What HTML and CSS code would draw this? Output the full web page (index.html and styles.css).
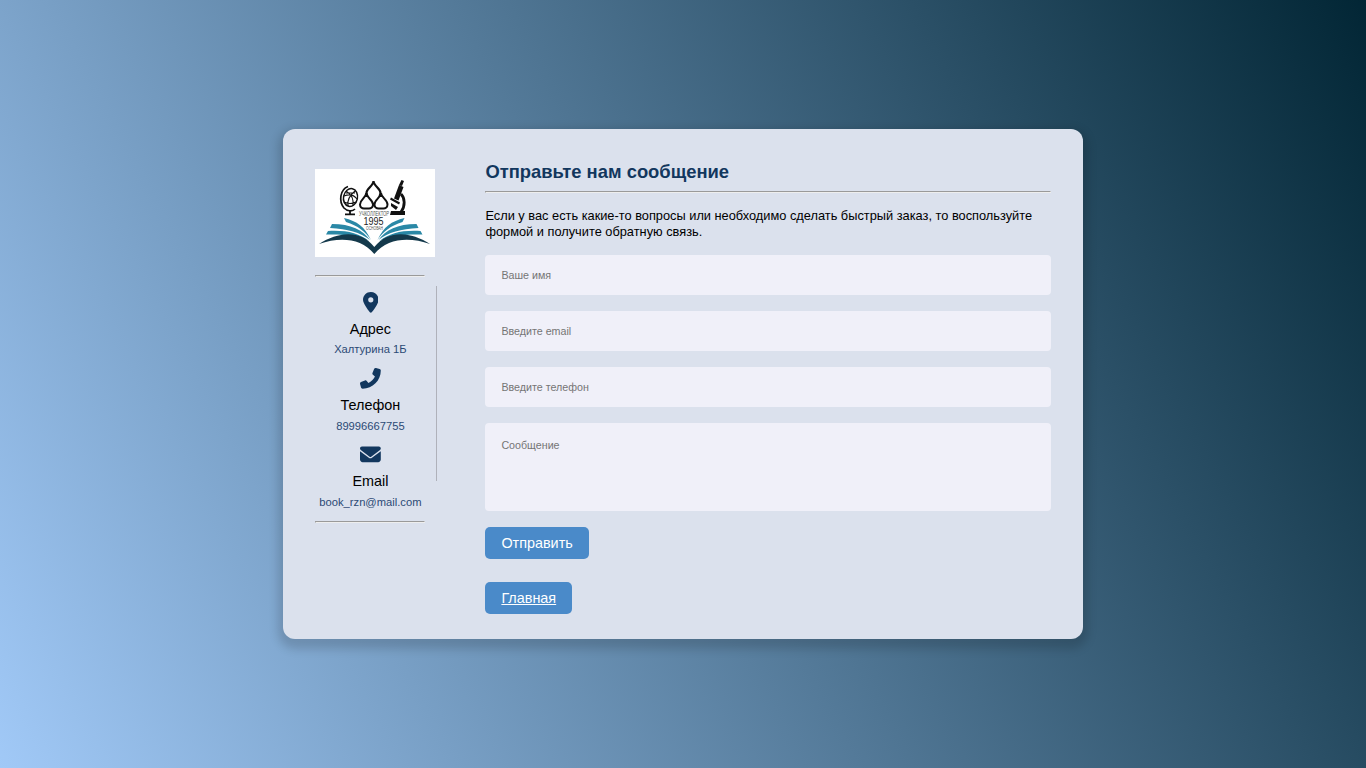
FILE: index.html
```html
<!DOCTYPE html>
<html lang="ru">
<head>
<meta charset="utf-8">
<title>Отправьте нам сообщение</title>
<link rel="stylesheet" href="styles.css">
</head>
<body>
<main class="card">
  <aside class="side">
    <svg class="logo" viewBox="0 0 120 88" role="img" aria-label="Учколлектор">
      <rect width="120" height="88" fill="#fff"/>
      <g fill="none" stroke="#111">
        <ellipse cx="35.500" cy="28.500" rx="7" ry="9" stroke-width="1.500" transform="rotate(12 35.500 28.500)"/>
        <path d="M33 17.500c-8 3-9.500 15-4 21.500 3 3 8 4 11 1" stroke-width="1.700"/>
        <path d="M29 27c5-2 10-1 13 3M29 33c4 2 8 2 12 0M31 22c5 3 8 8 7 15M40 22c-5 4-8 9-7 15M31 24h9" stroke-width="1.100"/>
        <path d="M35 41v4M30 45.300h10" stroke-width="1.800"/>
        <path d="M58.500 12c-.3 5-7 7.500-7 12 0 1 .4 2 1 3M58.500 12c.3 5 7 7.500 7 12 0 1-.4 2-1 3" stroke-width="2.200"/>
        <path d="M51.300 24c-.3 5-6.300 6.500-6.300 11.500 0 2.500 2 4 4 4h5c2 0 4-1.500 4-4 0-5-6.400-6.500-6.700-11.500zM66 24c-.3 5-6.500 6.500-6.500 11.500 0 2.500 2 4 4 4h5c2 0 4-1.500 4-4 0-5-6.200-6.500-6.500-11.500z" stroke-width="2"/>
        <path d="M86 25c4 4 4.500 12 0 18" stroke-width="2.800"/>
      </g>
      <g fill="#111">
        <path d="M84 16l4.500 2-5 13.500-4.500-2zM86.500 11l2.500 1-2 5-3-1zM76 28.500l9 5-1 2-9-5zM76 34l7 4-2 3-5-4zM76 42h14v4H75z"/>
      </g>
      <text x="59" y="46.500" class="logo-name" textLength="30" lengthAdjust="spacingAndGlyphs">УЧКОЛЛЕКТОР</text>
      <text x="58.500" y="56" class="logo-year" textLength="20" lengthAdjust="spacingAndGlyphs">1995</text>
      <text x="59.500" y="61.200" class="logo-sub" textLength="17" lengthAdjust="spacingAndGlyphs">ОСНОВАН</text>
      <g fill="#2a88a6">
        <path d="M29 49c13 3 21 9 27 22-6-9-13-14-25-18z"/>
        <path d="M17 55c19 0 31 6 38 16-10-8-22-11-40-12z"/>
        <path d="M13 62c18-1 31 2 41 10-11-5-23-7-43-6.500z"/>
      </g>
      <g fill="#2a88a6" transform="translate(118.500 0) scale(-1 1)">
        <path d="M29 49c13 3 21 9 27 22-6-9-13-14-25-18z"/>
        <path d="M17 55c19 0 31 6 38 16-10-8-22-11-40-12z"/>
        <path d="M13 62c18-1 31 2 41 10-11-5-23-7-43-6.500z"/>
      </g>
      <path fill="#14394b" d="M4 75c20-13 42-14 55.300 3C73 61 95 62 115 75c-21-7-42-6-55.700 10C46 69 25 68 4 75z"/>
    </svg>
    <hr class="side-rule">
    <section class="item">
      <svg class="icon" viewBox="0 0 384 512"><path d="M215.700 499.200C267 435 384 279.400 384 192 384 86 298 0 192 0S0 86 0 192c0 87.400 117 243 168.300 307.200 12.300 15.300 35.100 15.300 47.400 0zM192 128a64 64 0 1 1 0 128 64 64 0 1 1 0-128z"/></svg>
      <div class="topic">Адрес</div>
      <div class="detail">Халтурина 1Б</div>
    </section>
    <section class="item">
      <svg class="icon" viewBox="0 0 512 512"><path d="M347.100 24.600c7.700-18.600 28-28.500 47.400-23.200l88 24C499.900 30.200 512 46 512 64c0 247.400-200.600 448-448 448-18 0-33.800-12.100-38.600-29.500l-24-88c-5.300-19.400 4.600-39.700 23.200-47.400l96-40c16.300-6.800 35.200-2.100 46.300 11.600l40.400 49.300c70.400-33.300 127.400-90.300 160.700-160.700l-49.300-40.300c-13.700-11.200-18.400-30-11.600-46.300l40-96z"/></svg>
      <div class="topic">Телефон</div>
      <div class="detail low">89996667755</div>
    </section>
    <section class="item">
      <svg class="icon" viewBox="0 0 512 512"><path d="M48 64C21.500 64 0 85.500 0 112c0 15.100 7.100 29.300 19.200 38.400l217.600 163.200c11.400 8.500 27 8.500 38.400 0l217.600-163.200c12.100-9.100 19.200-23.300 19.200-38.400 0-26.500-21.500-48-48-48H48zM0 176v208c0 35.300 28.700 64 64 64h384c35.300 0 64-28.700 64-64V176L294.400 339.200c-22.800 17.100-54 17.100-76.800 0L0 176z"/></svg>
      <div class="topic">Email</div>
      <div class="detail low">book_rzn@mail.com</div>
    </section>
    <hr class="side-rule last">
  </aside>
  <div class="divider"></div>
  <section class="content">
    <h1 class="title">Отправьте нам сообщение</h1>
    <hr class="rule">
    <p class="intro">Если у вас есть какие-то вопросы или необходимо сделать быстрый заказ, то воспользуйте формой и получите обратную связь.</p>
    <form class="form">
      <input class="field" type="text" placeholder="Ваше имя">
      <input class="field" type="text" placeholder="Введите email">
      <input class="field" type="text" placeholder="Введите телефон">
      <textarea class="field message" placeholder="Сообщение"></textarea>
      <button class="btn" type="button">Отправить</button>
      <a class="btn home" href="#">Главная</a>
    </form>
  </section>
</main>
</body>
</html>
```
FILE: styles.css
```css
* { box-sizing: border-box; }
body {
  margin: 0;
  height: 100vh;
  display: flex;
  align-items: center;
  justify-content: center;
  overflow: hidden;
  font-family: "Liberation Sans", Arial, sans-serif;
  background: linear-gradient(62deg, #a1c9f7, #022635);
}
.card {
  width: 800px;
  height: 510px;
  display: flex;
  padding: 32px 32px 0;
  border-radius: 12px;
  background: #dbe1ed;
  box-shadow: 0 5px 10px 5px rgba(0, 0, 0, 0.15);
}
.side { width: 121px; flex: none; padding-top: 8px; }
.logo { display: block; width: 120px; height: 88px; }
.logo-name, .logo-year, .logo-sub { text-anchor: middle; fill: #555; }
.logo-name { font-size: 6.5px; }
.logo-year { font-size: 10px; fill: #222; }
.logo-sub { font-size: 4.5px; }
.side-rule { width: 110px; margin: 18px 0 15px; }
.side-rule.last { margin: 0.600px 0 0; }
.item { width: 110.800px; height: 76.100px; text-align: center; }
.icon { display: block; height: 20.800px; margin: 0 auto; fill: #12375e; }
.topic { margin-top: 7.800px; font-size: 14.400px; line-height: 17px; }
.detail { margin-top: 5.400px; font-size: 11.200px; line-height: 12px; color: #2b4a75; }
.detail.low { margin-top: 6.200px; }
.divider { width: 1px; flex: none; height: 195px; margin-top: 125px; background: #afb1ba; }
.content { width: 565.600px; margin-left: 48.400px; flex: none; }
.title { margin: 0; font-size: 18.400px; line-height: 21px; color: #12375e; }
.rule { margin: 9px 0 15px; }
.intro { margin: 0 0 15px; font-size: 12.800px; line-height: 16px; }
.form { display: flex; flex-direction: column; align-items: flex-start; }
.field {
  width: 100%;
  height: 40px;
  margin: 0 0 16px;
  padding: 0 16px;
  border: 0;
  border-radius: 4px;
  background: #f0f0f9;
  font: 10.700px "Liberation Sans", Arial, sans-serif;
}
.message { height: 88px; padding-top: 16px; resize: none; }
.btn {
  height: 32px;
  padding: 0 16px;
  border: 0;
  border-radius: 5px;
  background: #4a8ac9;
  color: #fff;
  font: 14.400px/32px "Liberation Sans", Arial, sans-serif;
}
.home { margin-top: 23px; }
```
